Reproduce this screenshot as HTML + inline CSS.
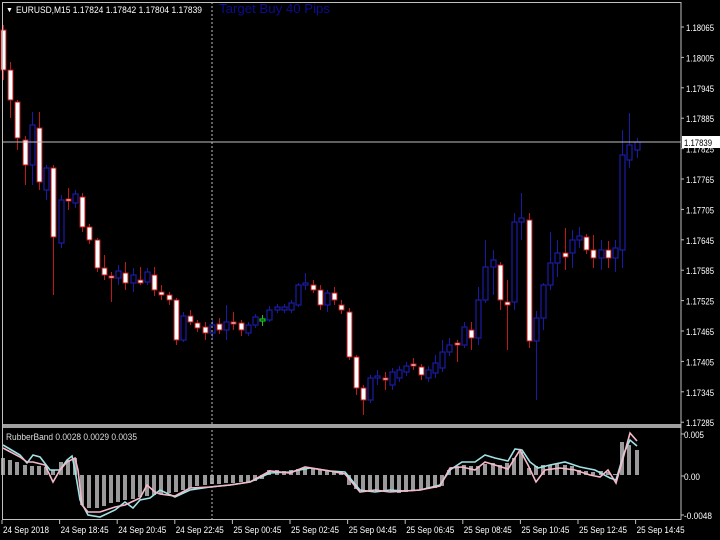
<!DOCTYPE html>
<html><head><meta charset="utf-8"><style>
html,body{margin:0;padding:0;background:#000;width:720px;height:540px;overflow:hidden}
svg{display:block}
text{font-family:"Liberation Sans",sans-serif;font-size:9.5px;fill:#fff}
</style></head><body>
<svg id="s" width="720" height="540" xmlns="http://www.w3.org/2000/svg">
<rect width="720" height="540" fill="#000"/>
<g id="candles"></g>
<g id="hist"></g>
<polyline id="cy" fill="none" stroke="#9fe3e6" stroke-width="1.6"/>
<polyline id="pk" fill="none" stroke="#f4b9c9" stroke-width="1.6"/>
<line x1="212" y1="2" x2="212" y2="520" stroke="#c0c0c0" stroke-width="1" stroke-dasharray="2,2"/>
<line x1="2" y1="142" x2="681" y2="142" stroke="#c0c0c0" stroke-width="1"/>
<rect x="2" y="424" width="679" height="4" fill="#a0a0a0"/>
<rect x="2.5" y="2.5" width="678.5" height="517" fill="none" stroke="#c0c0c0" stroke-width="1"/>
<rect x="682" y="136" width="38" height="12" fill="#fff"/>
<text x="684" y="146" style="fill:#000" textLength="28" lengthAdjust="spacingAndGlyphs">1.17839</text>
<text x="6" y="12" style="font-size:7px">▼</text>
<text x="16" y="13" textLength="186" lengthAdjust="spacingAndGlyphs">EURUSD,M15  1.17824 1.17842 1.17804 1.17839</text>
<text x="219" y="13" style="fill:#0c0c8c;font-size:13px" textLength="111" lengthAdjust="spacingAndGlyphs">Target Buy 40 Pips</text>
<text x="6" y="440" style="font-size:9px;fill:#ddd" textLength="131" lengthAdjust="spacingAndGlyphs">RubberBand  0.0028 0.0029 0.0035</text>
<g id="axis"></g>
</svg>
<script>
var NS="http://www.w3.org/2000/svg";
function el(p,t,a){var e=document.createElementNS(NS,t);for(var k in a)e.setAttribute(k,a[k]);p.appendChild(e);return e;}
var ax=document.getElementById('axis');
var prices=["1.18065","1.18005","1.17945","1.17885","1.17825","1.17765","1.17705","1.17645","1.17585","1.17525","1.17465","1.17405","1.17345","1.17285"];
for(var i=0;i<prices.length;i++){var y=27+i*30.4;el(ax,'line',{x1:681,y1:y,x2:684,y2:y,stroke:'#c0c0c0'});var t=el(ax,'text',{x:686,y:y+4,textLength:28,lengthAdjust:'spacingAndGlyphs'});t.textContent=prices[i];}
[["0.005",434,20],["0.00",476,16],["-0.0048",515,28]].forEach(function(p){el(ax,'line',{x1:681,y1:p[1],x2:684,y2:p[1],stroke:'#c0c0c0'});var t=el(ax,'text',{x:684,y:p[1]+4,textLength:p[2],lengthAdjust:'spacingAndGlyphs'});t.textContent=p[0];});
var times=["24 Sep 2018","24 Sep 18:45","24 Sep 20:45","24 Sep 22:45","25 Sep 00:45","25 Sep 02:45","25 Sep 04:45","25 Sep 06:45","25 Sep 08:45","25 Sep 10:45","25 Sep 12:45","25 Sep 14:45"];
for(var i=0;i<times.length;i++){var x=2+i*57.6;el(ax,'line',{x1:x,y1:520,x2:x,y2:524,stroke:'#c0c0c0'});var t=el(ax,'text',{x:x+1,y:533,textLength:i==0?46:48,lengthAdjust:'spacingAndGlyphs'});t.textContent=times[i];}
var C=[
['r',30,70,25,80],['r',70,100,62,118],['r',102,138,100,150],['r',140,165,136,185],['b',125,165,112,185],['r',128,182,112,190],['b',168,190,165,200],['r',168,237,165,295],['b',200,243,195,248],['r',199,201,188,210],
['b',194,203,190,208],['r',197,227,193,232],['r',227,240,224,244],['r',240,268,238,272],['r',268,275,255,280],['r',276,278,272,302],['b',271,278,265,285],['r',273,283,262,290],['b',275,283,268,292],['r',280,283,267,285],
['b',272,282,268,285],['r',275,290,267,296],['r',292,295,285,300],['r',295,300,292,305],['r',300,340,298,345],['b',316,340,312,342],['r',316,322,310,325],['r',323,328,320,332],['r',327,333,322,340],['b',325,333,320,338],
['r',324,330,318,334],['b',322,330,305,340],['r',322,324,312,330],['r',323,330,320,336],['b',325,333,322,336],['b',317,325,314,328],['g',319,321,315,326],['b',310,320,306,322],['b',307,310,304,313],['b',307,310,304,313],
['b',303,310,300,313],['b',285,305,283,307],['b',283,285,273,290],['r',285,290,280,293],['r',290,305,285,310],['b',293,305,290,312],['r',293,300,287,305],['r',305,310,300,314],['r',312,357,308,360],['r',357,388,355,395],
['r',388,400,385,415],['b',378,400,375,403],['b',376,378,370,385],['r',378,380,372,390],['b',372,385,368,390],['b',370,378,366,382],['b',366,372,362,376],['r',364,366,358,370],['r',367,375,364,380],['b',370,378,366,382],
['b',363,373,355,378],['b',352,368,340,372],['b',345,352,338,356],['r',343,345,340,362],['b',327,345,322,348],['r',330,338,322,350],['b',300,338,287,345],['b',267,300,240,303],['b',260,267,250,295],['r',265,300,262,310],
['r',302,305,280,350],['b',222,302,213,310],['b',218,222,193,240],['r',220,341,213,348],['b',318,341,311,400],['b',285,318,283,330],['b',263,285,232,290],['b',253,263,240,277],['r',253,257,228,270],['b',240,253,230,268],
['b',236,240,227,248],['r',237,250,234,254],['r',250,258,235,268],['b',250,258,240,270],['r',250,258,241,268],['b',248,258,240,272],['b',155,250,130,268],['b',145,160,113,168],['b',142,150,138,158]];
var cg=document.getElementById('candles');
for(var i=0;i<C.length;i++){var c=C[i];var x=Math.round(3+i*7.2)+0.5;
 var col=c[0]=='r'?'#c01818':(c[0]=='g'?'#20c020':'#1a1aa8');
 el(cg,'line',{x1:x,y1:c[3],x2:x,y2:c[4],stroke:col,'stroke-width':1});
 var h=Math.max(c[2]-c[1],1.5);
 if(c[0]=='r')el(cg,'rect',{x:x-2.5,y:c[1],width:5,height:h,fill:'#fff',stroke:col,'stroke-width':1});
 else el(cg,'rect',{x:x-2.5,y:c[1],width:5,height:h,fill:'#000',stroke:col,'stroke-width':1.2});
}
var H=[458,460,462,465,466,466,467,470,462,460,458,505,508,508,506,503,502,500,499,497,496,495,494,493,492,490,488,486,485,484,484,483,483,482,482,481,479,470,470,471,470,469,468,468,469,470,471,472,485,489,491,492,492,491,492,493,492,491,490,489,488,486,470,466,465,466,466,464,463,465,463,458,452,468,466,465,465,464,465,466,470,471,472,471,472,474,442,445,450];
var hg=document.getElementById('hist');
for(var i=0;i<H.length;i++){var x=Math.round(3+i*7.2)-2;var z=475;var y=Math.min(z,H[i]);el(hg,'rect',{x:x,y:y,width:4,height:Math.abs(H[i]-z),fill:'#9a9a9a'});}
document.getElementById('cy').setAttribute('points',"3,445 20,455 27,463 33,455 40,457 50,470 60,470 67,460 72,456 75,470 80,500 88,515 100,517 115,510 125,502 133,508 140,500 150,498 160,490 175,497 190,490 210,487 230,485 250,482 270,473 290,472 310,468 330,471 345,472 360,490 375,492 390,490 405,491 420,490 440,485 450,470 462,462 475,462 485,455 495,458 508,461 515,449 522,450 530,462 538,468 550,465 565,462 580,467 595,470 610,478 616,480 624,453 630,440 637,446");
document.getElementById('pk').setAttribute('points',"3,448 20,457 27,462 33,462 45,465 53,482 60,470 67,462 75,458 78,470 82,505 88,512 100,512 115,507 125,505 140,498 147,485 155,492 160,494 175,496 190,488 210,487 230,485 250,482 270,471 290,473 305,467 330,471 345,474 360,492 375,490 390,492 405,491 420,490 440,486 450,468 462,467 475,470 485,462 495,465 508,469 520,450 528,465 536,482 545,470 560,468 575,470 590,475 600,477 608,470 616,483 624,455 630,433 637,441");
</script>
</body></html>
